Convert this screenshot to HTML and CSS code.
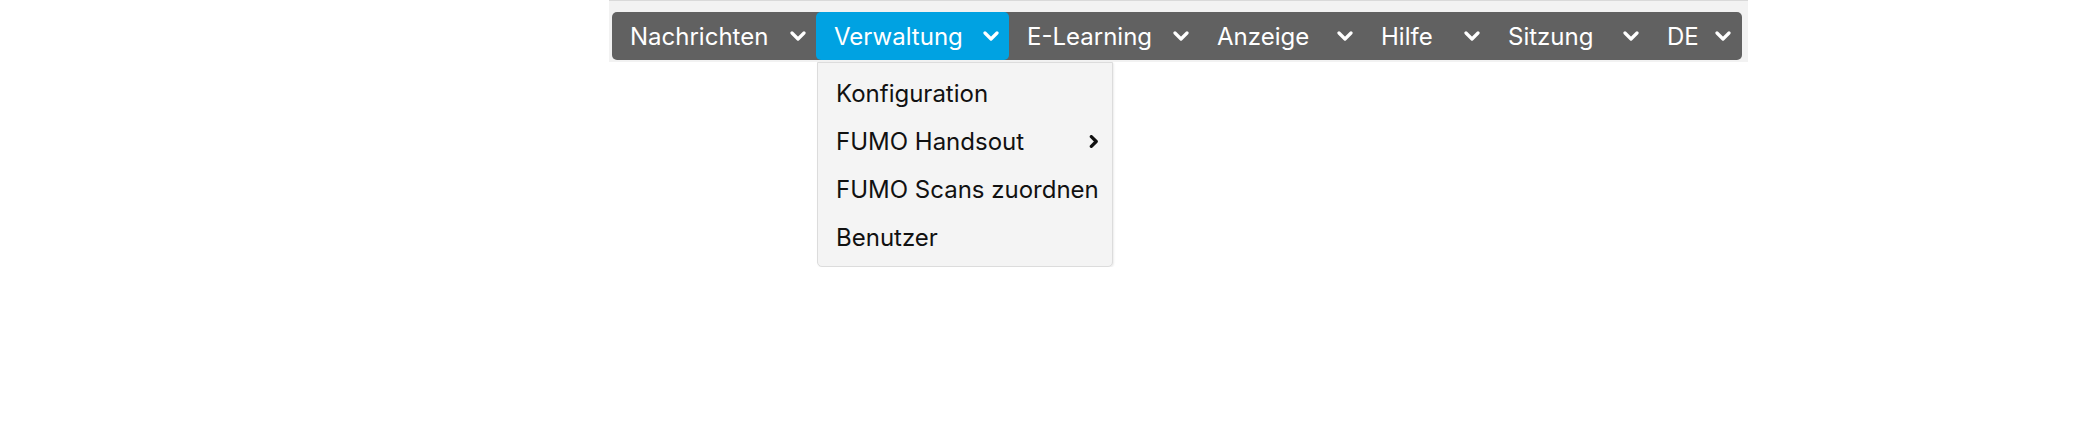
FILE: index.html
```html
<!DOCTYPE html>
<html lang="de">
<head>
  <meta charset="UTF-8">
  <title>Menü</title>
  <link rel="stylesheet" href="styles.css">
</head>
<body>
  <div class="topbar">
    <nav class="menubar">
      <div class="menu-item">Nachrichten
        <svg class="chevron" viewBox="0 0 16 10"><path d="M2 2 L8 8 L14 2"/></svg>
      </div>
      <div class="menu-item active">Verwaltung
        <svg class="chevron" viewBox="0 0 16 10"><path d="M2 2 L8 8 L14 2"/></svg>
      </div>
      <div class="menu-item">E-Learning
        <svg class="chevron" viewBox="0 0 16 10"><path d="M2 2 L8 8 L14 2"/></svg>
      </div>
      <div class="menu-item">Anzeige
        <svg class="chevron" viewBox="0 0 16 10"><path d="M2 2 L8 8 L14 2"/></svg>
      </div>
      <div class="menu-item">Hilfe
        <svg class="chevron" viewBox="0 0 16 10"><path d="M2 2 L8 8 L14 2"/></svg>
      </div>
      <div class="menu-item">Sitzung
        <svg class="chevron" viewBox="0 0 16 10"><path d="M2 2 L8 8 L14 2"/></svg>
      </div>
      <div class="menu-item">DE
        <svg class="chevron" viewBox="0 0 16 10"><path d="M2 2 L8 8 L14 2"/></svg>
      </div>
    </nav>
  </div>

  <!-- Open submenu of "Verwaltung" -->
  <ul class="dropdown">
    <li>Konfiguration</li>
    <li>FUMO Handsout
      <svg class="arrow" viewBox="0 0 8 12"><path d="M2 1.5 L6.5 6 L2 10.5"/></svg>
    </li>
    <li>FUMO Scans zuordnen</li>
    <li>Benutzer</li>
  </ul>
</body>
</html>
```

FILE: styles.css
```css
/* Page */
body {
  margin: 0;
  background-color: #fff;
  font-family: Inter, "Liberation Sans", sans-serif;
}

.topbar {
  margin-left: 609px;
  width: 1130px;
  padding: 11px 6px 2px 3px;
  background-color: #f2f2f2;
  border-top: 1px solid #d9d9d9;
}

/* Main menu bar */
.menubar {
  display: grid;
  grid-template-columns: 204px 193px 190px 164px 127px 159px 92px;
  height: 48px;
  background-color: #616161;
  border-radius: 5px;
}

.menu-item {
  display: flex;
  align-items: center;
  justify-content: space-between;
  padding: 0 10px 0 18px;
  color: #fff;
  font-size: 24px;
  border-radius: 5px;
  cursor: pointer;
}

.menu-item.active {
  background-color: #00a2e2;
}

.chevron {
  width: 16px;
  height: 10px;
  fill: none;
  stroke: #fff;
  stroke-width: 3.2;
  stroke-linecap: round;
  stroke-linejoin: round;
}

/* Dropdown */
.dropdown {
  box-sizing: border-box;
  width: 296px;
  margin: 0 0 0 817px;
  padding: 6px 0 5px;
  list-style: none;
  background-color: #f4f4f4;
  border: 1px solid #dcdcdc;
  border-radius: 0 0 5px 5px;
  box-shadow: 1px 1px 2px rgba(0, 0, 0, 0.08);
}

.dropdown li {
  display: flex;
  align-items: center;
  justify-content: space-between;
  height: 48px;
  padding: 0 14px 0 18px;
  color: #111;
  font-size: 24px;
  white-space: nowrap;
}

.arrow {
  width: 9px;
  height: 13px;
  fill: none;
  stroke: #111;
  stroke-width: 3;
  stroke-linecap: round;
  stroke-linejoin: round;
}
```
